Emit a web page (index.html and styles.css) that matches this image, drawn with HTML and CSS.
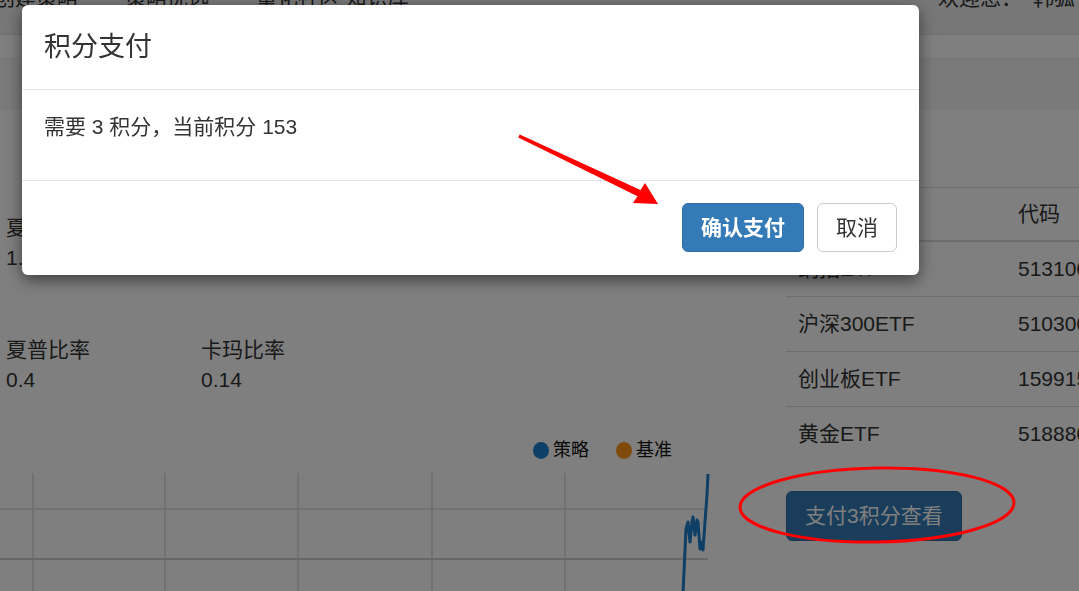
FILE: index.html
```html
<!DOCTYPE html>
<html lang="zh-CN">
<head>
    <meta charset="UTF-8">
    <title>策略详情</title>
    <link rel="stylesheet" href="styles.css">
</head>
<body>

<div class="navbar">
    <ul class="navbar-nav">
        <li class="nav-link">创建策略</li>
        <li class="nav-link">策略优选</li>
        <li class="nav-link">量化社区 知识库</li>
    </ul>
    <div class="navbar-user">
        <span>欢迎您：</span>
        <span class="user-name">韩狐</span>
    </div>
</div>

<div class="page-band"></div>

<div class="content">
    <div class="left-col">
        <div class="metrics">
            <div class="metric">
                <div class="metric-label">夏普比率</div>
                <div class="metric-value">1.25</div>
            </div>
            <div class="metric">
                <div class="metric-label">卡玛比率</div>
                <div class="metric-value">0.86</div>
            </div>
            <div class="metric">
                <div class="metric-label">年化收益</div>
                <div class="metric-value">18.4%</div>
            </div>
        </div>
        <div class="metrics">
            <div class="metric">
                <div class="metric-label">夏普比率</div>
                <div class="metric-value">0.4</div>
            </div>
            <div class="metric">
                <div class="metric-label">卡玛比率</div>
                <div class="metric-value">0.14</div>
            </div>
        </div>

        <div class="legend">
            <span class="legend-item"><span class="dot dot-blue"></span>策略</span>
            <span class="legend-item"><span class="dot dot-orange"></span>基准</span>
        </div>

        <svg class="chart" width="720" height="131" viewBox="0 0 720 131">
            <g stroke="#dcdcdc" stroke-width="1.5">
                <line x1="33" y1="11" x2="33" y2="131"/>
                <line x1="165" y1="11" x2="165" y2="131"/>
                <line x1="298" y1="11" x2="298" y2="131"/>
                <line x1="432" y1="11" x2="432" y2="131"/>
                <line x1="565" y1="11" x2="565" y2="131"/>
                <line x1="0" y1="47" x2="708" y2="47"/>
            </g>
            <line x1="0" y1="97" x2="708" y2="97" stroke="#d0d0d0" stroke-width="2"/>
            <polyline fill="none" stroke="#1c7ecc" stroke-width="3" stroke-linejoin="round"
                      points="683,131 686,67 688,60 690,80 692,60 693,55 695,73 697,58 698,60 700,87 702,80 703,88 705,60 707,33 708,12"/>
        </svg>
    </div>

    <div class="right-col">
        <table class="etf-table">
            <thead>
            <tr>
                <th class="col-name">名称</th>
                <th>代码</th>
            </tr>
            </thead>
            <tbody>
            <tr><td>纳指ETF</td><td>513100</td></tr>
            <tr><td>沪深300ETF</td><td>510300</td></tr>
            <tr><td>创业板ETF</td><td>159915</td></tr>
            <tr><td>黄金ETF</td><td>518880</td></tr>
            </tbody>
        </table>
        <button type="button" class="btn btn-primary pay-btn">支付3积分查看</button>
    </div>
</div>

<div class="modal-backdrop"></div>

<div class="modal">
    <div class="modal-header">
        <h4 class="modal-title">积分支付</h4>
    </div>
    <div class="modal-body">
        <p>需要 3 积分，当前积分 153</p>
    </div>
    <div class="modal-footer">
        <button type="button" class="btn btn-primary btn-confirm">确认支付</button>
        <button type="button" class="btn btn-default">取消</button>
    </div>
</div>

<!-- red marks drawn over the screenshot -->
<svg class="marks" width="1079" height="591" viewBox="0 0 1079 591">
    <polygon fill="#ff0000"
             points="519.7,134.6 640.5,189.9 645,183 658,204 633,203 637.5,196.2 518.3,137.4"/>
    <ellipse cx="877" cy="505" rx="137" ry="37" fill="none" stroke="#ff0000" stroke-width="3"
             transform="rotate(-1 877 505)"/>
</svg>

</body>
</html>
```

FILE: styles.css
```css
html, body {
    margin: 0;
    padding: 0;
}

body {
    width: 1079px;
    height: 591px;
    overflow: hidden;
    background-color: #fff;
    color: #333;
    font-family: 'Liberation Sans', 'Noto Sans CJK SC', sans-serif;
    font-size: 21px;
    line-height: 30px;
}

.navbar {
    display: flex;
    justify-content: space-between;
    height: 34px;
    background-color: #eee;
    border-bottom: 1px solid #ddd;
    overflow: hidden;
}

.navbar-nav {
    display: flex;
    gap: 47px;
    margin: -17px 0 0 -6px;
    padding: 0;
    list-style: none;
}

.navbar-user {
    display: flex;
    gap: 11px;
    margin-top: -17px;
    padding-right: 4px;
}

.page-band {
    height: 53px;
    margin-top: 22px;
    background-color: #f5f5f5;
}

.content {
    display: flex;
}

.left-col {
    flex: 0 0 786px;
    padding-left: 6px;
    box-sizing: border-box;
}

.metrics {
    display: flex;
    margin-top: 103px;
}

.metrics + .metrics {
    margin-top: 62px;
}

.metric {
    width: 195px;
}

.legend {
    display: flex;
    gap: 27px;
    margin: 43px 0 0 527px;
    font-size: 18px;
    line-height: 24px;
    color: #111;
}

.legend-item {
    display: flex;
    align-items: center;
    gap: 4px;
}

.dot {
    display: inline-block;
    width: 16px;
    height: 17px;
    border-radius: 50%;
}

.dot-blue {
    background-color: #1c7ecc;
}

.dot-orange {
    background-color: #ff9418;
}

.chart {
    display: block;
    margin: 0 0 0 -6px;
}

.right-col {
    flex: 0 0 auto;
    padding-top: 77px;
}

.etf-table {
    width: 420px;
    border-collapse: collapse;
    border-top: 1px solid #ddd;
}

.etf-table th,
.etf-table td {
    text-align: left;
    padding: 11px 12px 12px;
    line-height: 31px;
    font-weight: normal;
}

.etf-table th {
    padding: 11px 12px 11px;
    line-height: 30px;
    border-bottom: 2px solid #ddd;
}

.etf-table td {
    border-top: 1px solid #ddd;
}

.etf-table tbody tr:first-child td {
    border-top: none;
}

.col-name {
    width: 196px;
}

.btn {
    display: inline-block;
    padding: 9px 18px;
    font-family: inherit;
    font-size: 21px;
    line-height: 29px;
    border: 1px solid transparent;
    border-radius: 6px;
    cursor: pointer;
}

.btn-primary {
    color: #fff;
    background-color: #337ab7;
    border-color: #2e6da4;
}

.btn-default {
    color: #333;
    background-color: #fff;
    border-color: #ccc;
}

.pay-btn {
    display: block;
    margin-top: 30px;
    line-height: 30px;
}

.modal-backdrop {
    position: fixed;
    top: 0;
    left: 0;
    right: 0;
    bottom: 0;
    background-color: rgba(0, 0, 0, 0.5);
}

.modal {
    position: absolute;
    top: 5px;
    left: 22px;
    width: 897px;
    background-color: #fff;
    border-radius: 6px;
    box-shadow: 0 5px 15px rgba(0, 0, 0, 0.5);
}

.modal-header {
    padding: 22px;
    border-bottom: 1px solid #e5e5e5;
}

.modal-title {
    margin: 0;
    font-size: 27px;
    line-height: 40px;
    font-weight: normal;
}

.modal-body {
    padding: 22px;
}

.modal-body p {
    margin: 0 0 16px;
}

.modal-footer {
    display: flex;
    justify-content: flex-end;
    gap: 13px;
    padding: 22px 22px 23px;
    border-top: 1px solid #e5e5e5;
}

.btn-confirm {
    font-weight: bold;
}

.marks {
    position: absolute;
    top: 0;
    left: 0;
    pointer-events: none;
}
```
